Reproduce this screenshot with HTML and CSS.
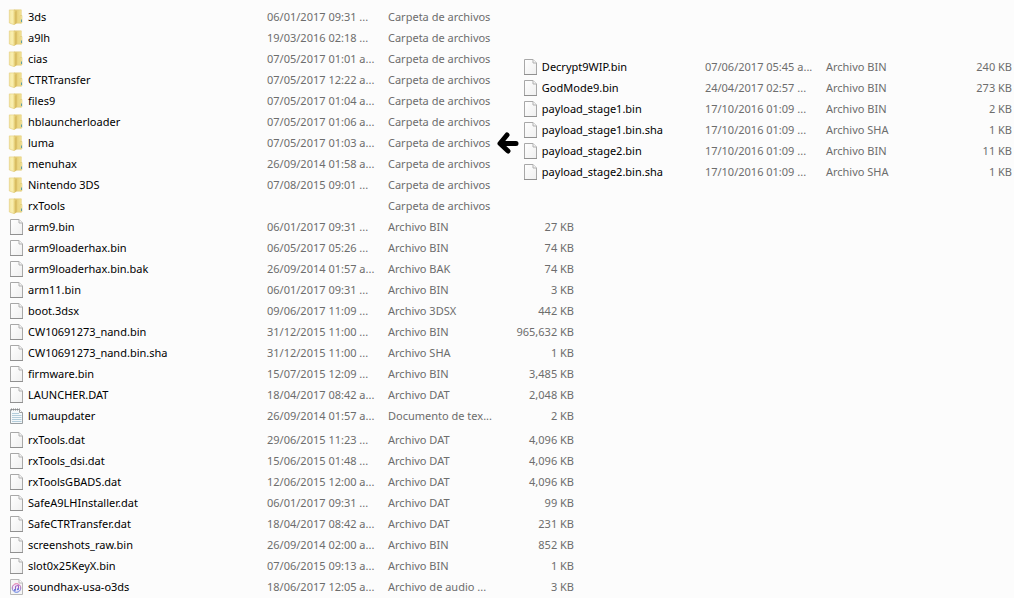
FILE: index.html
```html
<!DOCTYPE html>
<html lang="es">
<head>
  <meta charset="UTF-8" />
  <title>Archivos</title>
  <link rel="stylesheet" href="styles.css">
</head>
<body>
  <svg class="sprites" aria-hidden="true">
    <defs>
      <linearGradient id="gFront" x1="0" x2="1"><stop offset="0" stop-color="#f3e69c" /><stop offset=".5" stop-color="#faf0b4" /><stop offset="1" stop-color="#e6cf72" /></linearGradient>
      <linearGradient id="gBack" x1="0" x2="1"><stop offset="0" stop-color="#dcc066" /><stop offset="1" stop-color="#f5e596" /></linearGradient>
      <linearGradient id="gPage" x1="0" y1="0" x2="1" y2="1"><stop offset="0" stop-color="#ffffff" /><stop offset="1" stop-color="#efefef" /></linearGradient>
      <linearGradient id="gNote" x1="0" y1="0" x2="0" y2="1"><stop offset="0" stop-color="#e668a0" /><stop offset="1" stop-color="#5b7fe0" /></linearGradient>
    </defs>
    <symbol id="folder" viewBox="0 0 16 16">
      <path d="M6 .800h7.300v13.400H6z" fill="url(#gBack)" stroke="#e2cd7c" stroke-width=".6" />
      <path d="M1.300.900h4.700l1.300 1v13l-1.200.8-4.800-1.700z" fill="url(#gFront)" stroke="#e2cd7c" stroke-width=".6" />
      <path d="M6.800 2.800l2-1v12.100l-2 1.500z" fill="#d9bd62" />
      <path d="M12.200 6.500h1.800v7.300h-1.800z" fill="#f6e8a0" stroke="#d8c06a" stroke-width=".5" />
      <path d="M13.500 10.500v2.500" stroke="#5f9fa6" stroke-width="1" />
    </symbol>
    <symbol id="file" viewBox="0 0 16 16">
      <path d="M2.500.500h8.500l3.500 3.500v11.500h-12z" fill="url(#gPage)" stroke="#a8a8a8" />
      <path d="M2 15.500h13" stroke="#909090" />
      <path d="M11 .500v3.500h3.500" fill="#f4f4f4" stroke="#b0b0b0" />
    </symbol>
    <symbol id="text" viewBox="0 0 16 16">
      <path d="M2.500 1.500h9l3 3v11h-12z" fill="#f4f8fa" stroke="#9a9fa2" />
      <path d="M3 1.500h9" stroke="#888" stroke-dasharray="1 1" stroke-width="2" />
      <path d="M11.500 1.500v3h3" fill="#fff" stroke="#a0a0a0" />
      <path d="M4 5.500h7M4 7.500h9.500M4 9.500h9.500M4 11.500h9.500M4 13.500h9.500" stroke="#b3cddb" />
    </symbol>
    <symbol id="audio" viewBox="0 0 16 16">
      <path d="M2.500.500h8.500l3.500 3.500v11.500h-12z" fill="#f5f5f5" stroke="#b8b8b8" />
      <path d="M11 .500v3.500h3.500" fill="#fff" stroke="#b8b8b8" />
      <circle cx="8.500" cy="9" r="4.300" fill="#efe6f8" stroke="url(#gNote)" stroke-width="1" />
      <path d="M7.500 11V7.200l3-.8v3.800" fill="none" stroke="#a060c0" stroke-width="1" />
      <circle cx="6.900" cy="11" r="1" fill="#5879dc" />
      <circle cx="9.900" cy="10.300" r="1" fill="#5879dc" />
    </symbol>
  </svg>

  <main class="explorer">
    <table class="file-list root-list">
      <tbody id="rootTop"></tbody>
      <tbody id="rootBottom" class="group"></tbody>
    </table>

    <div class="detail">
      <svg class="arrow" viewBox="0 0 22 22" role="img" aria-label="luma">
        <path d="M19 11.500H3.500M10 3L3 11.500L11 19" />
      </svg>
      <table class="file-list">
        <tbody id="lumaFiles"></tbody>
      </table>
    </div>
  </main>

  <script>
    // icon, name, date, type, size
    const rootTop = [
      ['folder', '3ds', '06/01/2017 09:31 ...', 'Carpeta de archivos', ''],
      ['folder', 'a9lh', '19/03/2016 02:18 ...', 'Carpeta de archivos', ''],
      ['folder', 'cias', '07/05/2017 01:01 a...', 'Carpeta de archivos', ''],
      ['folder', 'CTRTransfer', '07/05/2017 12:22 a...', 'Carpeta de archivos', ''],
      ['folder', 'files9', '07/05/2017 01:04 a...', 'Carpeta de archivos', ''],
      ['folder', 'hblauncherloader', '07/05/2017 01:06 a...', 'Carpeta de archivos', ''],
      ['folder', 'luma', '07/05/2017 01:03 a...', 'Carpeta de archivos', ''],
      ['folder', 'menuhax', '26/09/2014 01:58 a...', 'Carpeta de archivos', ''],
      ['folder', 'Nintendo 3DS', '07/08/2015 09:01 ...', 'Carpeta de archivos', ''],
      ['folder', 'rxTools', '', 'Carpeta de archivos', ''],
      ['file', 'arm9.bin', '06/01/2017 09:31 ...', 'Archivo BIN', '27 KB'],
      ['file', 'arm9loaderhax.bin', '06/05/2017 05:26 ...', 'Archivo BIN', '74 KB'],
      ['file', 'arm9loaderhax.bin.bak', '26/09/2014 01:57 a...', 'Archivo BAK', '74 KB'],
      ['file', 'arm11.bin', '06/01/2017 09:31 ...', 'Archivo BIN', '3 KB'],
      ['file', 'boot.3dsx', '09/06/2017 11:09 ...', 'Archivo 3DSX', '442 KB'],
      ['file', 'CW10691273_nand.bin', '31/12/2015 11:00 ...', 'Archivo BIN', '965,632 KB'],
      ['file', 'CW10691273_nand.bin.sha', '31/12/2015 11:00 ...', 'Archivo SHA', '1 KB'],
      ['file', 'firmware.bin', '15/07/2015 12:09 ...', 'Archivo BIN', '3,485 KB'],
      ['file', 'LAUNCHER.DAT', '18/04/2017 08:42 a...', 'Archivo DAT', '2,048 KB'],
      ['text', 'lumaupdater', '26/09/2014 01:57 a...', 'Documento de tex...', '2 KB']
    ];

    const rootBottom = [
      ['file', 'rxTools.dat', '29/06/2015 11:23 ...', 'Archivo DAT', '4,096 KB'],
      ['file', 'rxTools_dsi.dat', '15/06/2015 01:48 ...', 'Archivo DAT', '4,096 KB'],
      ['file', 'rxToolsGBADS.dat', '12/06/2015 12:00 a...', 'Archivo DAT', '4,096 KB'],
      ['file', 'SafeA9LHInstaller.dat', '06/01/2017 09:31 ...', 'Archivo DAT', '99 KB'],
      ['file', 'SafeCTRTransfer.dat', '18/04/2017 08:42 a...', 'Archivo DAT', '231 KB'],
      ['file', 'screenshots_raw.bin', '26/09/2014 02:00 a...', 'Archivo BIN', '852 KB'],
      ['file', 'slot0x25KeyX.bin', '07/06/2015 09:13 a...', 'Archivo BIN', '1 KB'],
      ['audio', 'soundhax-usa-o3ds', '18/06/2017 12:05 a...', 'Archivo de audio ...', '3 KB']
    ];

    const lumaFiles = [
      ['file', 'Decrypt9WIP.bin', '07/06/2017 05:45 a...', 'Archivo BIN', '240 KB'],
      ['file', 'GodMode9.bin', '24/04/2017 02:57 ...', 'Archivo BIN', '273 KB'],
      ['file', 'payload_stage1.bin', '17/10/2016 01:09 ...', 'Archivo BIN', '2 KB'],
      ['file', 'payload_stage1.bin.sha', '17/10/2016 01:09 ...', 'Archivo SHA', '1 KB'],
      ['file', 'payload_stage2.bin', '17/10/2016 01:09 ...', 'Archivo BIN', '11 KB'],
      ['file', 'payload_stage2.bin.sha', '17/10/2016 01:09 ...', 'Archivo SHA', '1 KB']
    ];

    function renderRows(id, rows) {
      document.getElementById(id).innerHTML = rows.map(([icon, name, date, type, size]) => `
        <tr>
          <td class="name"><div class="entry"><svg class="icon"><use href="#${icon}" /></svg><span>${name}</span></div></td>
          <td class="date">${date}</td>
          <td class="type">${type}</td>
          <td class="size">${size}</td>
        </tr>`).join('');
    }

    renderRows('rootTop', rootTop);
    renderRows('rootBottom', rootBottom);
    renderRows('lumaFiles', lumaFiles);
  </script>
</body>
</html>
```
FILE: styles.css
```css
body {
  margin: 0;
  background: #fcfcfc;
  color: #000;
  font-family: 'Segoe UI', 'Noto Sans', sans-serif;
  font-size: 11px;
  line-height: 20px;
}

.sprites {
  position: absolute;
  width: 0;
  height: 0;
}

/* the luma listing sits over the empty size cells of the folders */
.explorer {
  display: grid;
  grid-template-columns: 49fr 51fr;
  align-items: start;
  padding-top: 6px;
}

.root-list {
  grid-column: 1 / -1;
  grid-row: 1;
  justify-self: start;
  margin-left: 8px;
}

.detail {
  grid-column: 2;
  grid-row: 1;
  display: flex;
  align-items: center;
  gap: 3px;
  padding-top: 50px;
  padding-right: 2px;
}

.detail .file-list {
  flex: 1;
}

.file-list {
  border-collapse: collapse;
  table-layout: fixed;
}

.file-list td {
  height: 21px;
  padding: 0;
  white-space: nowrap;
  color: #6d6d6d;
}

.file-list .name {
  width: 183px;
  color: #000;
}

.root-list .name {
  width: 259px;
}

.file-list .date {
  width: 121px;
}

.file-list .type {
  width: 116px;
}

.file-list .size {
  width: 70px;
  text-align: right;
}

.group::before {
  content: '';
  display: block;
  height: 3px;
}

.entry {
  display: flex;
  align-items: center;
  gap: 4px;
}

.icon {
  flex: none;
  width: 16px;
  height: 16px;
}

.arrow {
  flex: none;
  width: 22px;
  height: 22px;
  margin-top: 48px;
  fill: none;
  stroke: #000;
  stroke-width: 5;
  stroke-linecap: round;
  stroke-linejoin: round;
}
```
